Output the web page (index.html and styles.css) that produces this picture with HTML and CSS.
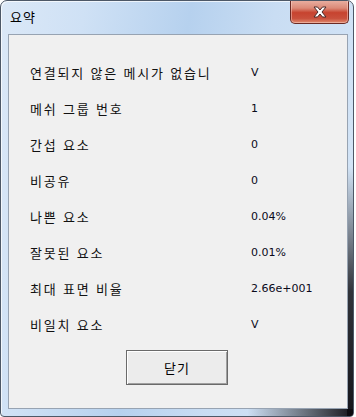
FILE: index.html
```html
<!DOCTYPE html>
<html lang="ko">
<head>
<meta charset="utf-8">
<link rel="stylesheet" href="styles.css">
</head>
<body>
<div class="window">
  <div class="titlebar">
    <span class="title">요약</span>
    <div class="close">
      <svg width="16" height="12" viewBox="0 0 16 12">
        <path d="M2 1 L5.5 1 L8 4 L10.5 1 L14 1 L10 6 L14 11 L10.5 11 L8 8 L5.5 11 L2 11 L6 6 Z" fill="#ffffff" stroke="#4a2a28" stroke-width="1" stroke-linejoin="round"/>
      </svg>
    </div>
  </div>
  <div class="client">
    <div class="rows">
      <div class="label">연결되지 않은 메시가 없습니</div><div class="value">V</div>
      <div class="label">메쉬 그룹 번호</div><div class="value">1</div>
      <div class="label">간섭 요소</div><div class="value">0</div>
      <div class="label">비공유</div><div class="value">0</div>
      <div class="label">나쁜 요소</div><div class="value">0.04%</div>
      <div class="label">잘못된 요소</div><div class="value">0.01%</div>
      <div class="label">최대 표면 비율</div><div class="value">2.66e+001</div>
      <div class="label">비일치 요소</div><div class="value">V</div>
    </div>
    <div class="actions">
      <button class="btn">닫기</button>
    </div>
  </div>
</div>
</body>
</html>
```

FILE: styles.css
```css
html, body {
  margin: 0;
  padding: 0;
  background: #ffffff;
}
.window {
  box-sizing: border-box;
  width: 354px;
  height: 417px;
  border: 1px solid #4d5867;
  border-radius: 7px 7px 4px 4px;
  background: linear-gradient(100deg, #dbe8f7 0%, #cfe1f5 20%, #b6d1ee 45%, #c9ddf3 65%, #d6e6f7 100%);
  padding: 0 5px 7px 7px;
  display: flex;
  flex-direction: column;
  position: relative;
  overflow: hidden;
  box-shadow: inset 1px 1px 0 rgba(255,255,255,0.7);
}
.window::after {
  content: "";
  position: absolute;
  right: 0;
  top: 0;
  bottom: 0;
  width: 6px;
  background: linear-gradient(to bottom, rgba(20,20,25,0) 40%, rgba(20,20,25,0.85) 70%, rgba(10,10,15,0.95) 100%);
  pointer-events: none;
}
.window::before {
  content: "";
  position: absolute;
  left: 0;
  right: 0;
  bottom: 0;
  height: 7px;
  background: linear-gradient(to right, rgba(10,10,15,0) 70%, rgba(10,10,15,0.95) 100%);
  pointer-events: none;
}
.titlebar {
  height: 33px;
  display: flex;
  align-items: flex-start;
  justify-content: space-between;
  position: relative;
}
.title {
  font-family: "Noto Sans CJK KR", sans-serif;
  font-size: 13px;
  letter-spacing: 1px;
  line-height: 16px;
  margin-top: 8px;
  margin-left: 2px;
  color: #000000;
}
.close {
  position: absolute;
  right: -1px;
  top: -1px;
  width: 57px;
  height: 23px;
  border: 1px solid #6a2a24;
  border-top: none;
  border-radius: 0 0 5px 5px;
  background: linear-gradient(to bottom, #eab2a4 0%, #dc8a78 35%, #c7432f 55%, #c9503c 80%, #e08a6e 100%);
  display: flex;
  align-items: center;
  justify-content: center;
  box-shadow: inset 0 0 0 1px rgba(255,220,210,0.45);
}
.client {
  flex: 1;
  background: #f0f0f0;
  border: 1px solid #97a3b2;
  display: flex;
  flex-direction: column;
  padding: 20px 0 0 21px;
  position: relative;
  z-index: 1;
}
.rows {
  display: grid;
  grid-template-columns: 221px auto;
  grid-auto-rows: 36px;
  align-items: center;
}
.label {
  font-family: "Noto Sans CJK KR", sans-serif;
  font-size: 13px;
  letter-spacing: 1.8px;
  word-spacing: 0;
  color: #111111;
  line-height: 16px;
}
.value {
  font-family: "DejaVu Sans", sans-serif;
  font-size: 11px;
  color: #0a0a1a;
  line-height: 14px;
}
.actions {
  display: flex;
  padding-top: 7px;
  padding-left: 96px;
}
.btn {
  width: 102px;
  height: 35px;
  background: #ececec;
  border: 1px solid #6a6a6a;
  box-shadow: inset 1px 1px 0 #ffffff, inset -1px -1px 0 #a0a0a0;
  font-family: "Noto Sans CJK KR", sans-serif;
  font-size: 13px;
  letter-spacing: 1px;
  color: #000000;
  padding: 0;
}
```
